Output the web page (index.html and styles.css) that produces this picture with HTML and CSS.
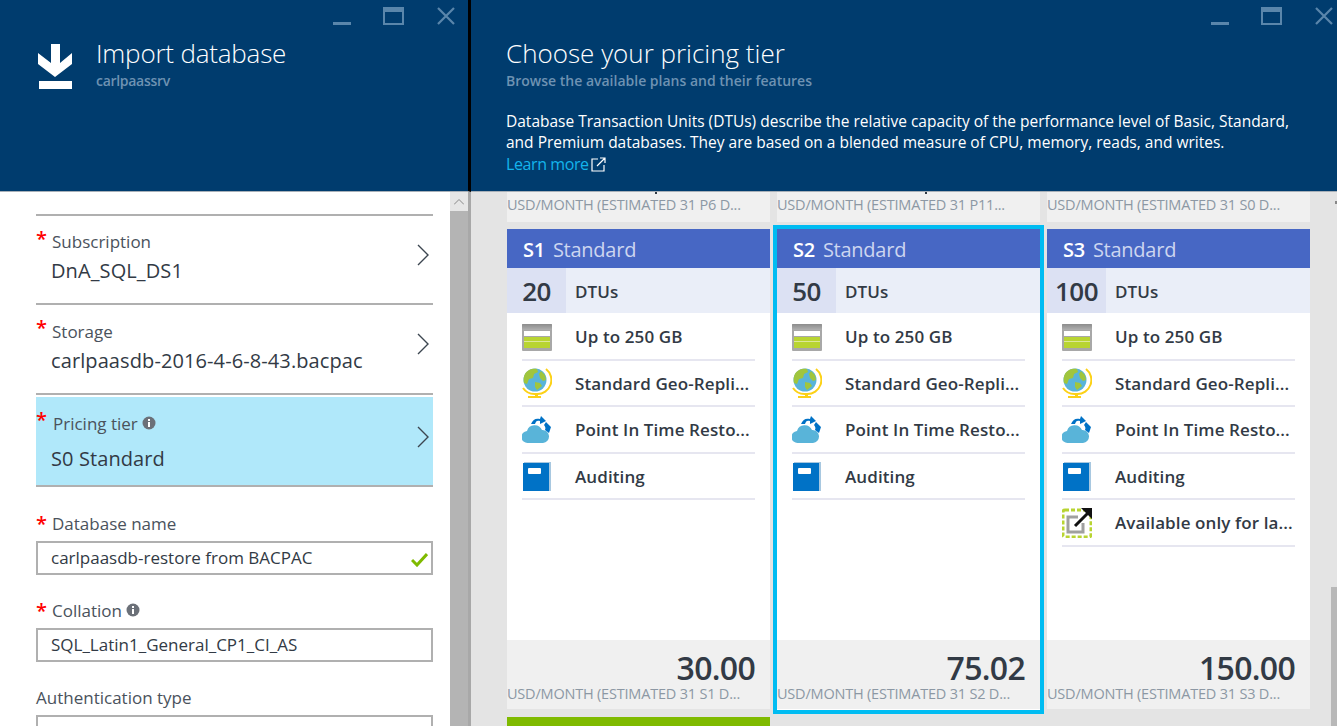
FILE: index.html
```html
<!DOCTYPE html>
<html lang="en">
<head>
  <meta charset="UTF-8">
  <title>Import database</title>
  <link rel="stylesheet" href="styles.css">
</head>
<body>
  <svg class="defs" width="0" height="0">
    <defs>
      <linearGradient id="g-top" x1="0" y1="0" x2="0" y2="1">
        <stop offset="0" stop-color="#8c8c8c"/>
        <stop offset="1" stop-color="#b0b0b0"/>
      </linearGradient>
    </defs>
    <symbol id="i-storage" viewBox="0 0 30 30">
      <rect x="0" y="2" width="30" height="27" rx="1" fill="#a8a8a8"/>
      <rect x="0" y="2" width="30" height="6" rx="1" fill="url(#g-top)"/>
      <rect x="2" y="9" width="26" height="5" fill="#fff"/>
      <rect x="2" y="15" width="26" height="4" fill="#b8d432"/>
      <rect x="2" y="20" width="26" height="6" fill="#b8d432"/>
      <rect x="2" y="19" width="26" height="1" fill="#dde89a"/>
    </symbol>
    <symbol id="i-globe" viewBox="0 0 30 30">
      <path d="M24 1a14 14 0 0 1-9 25" fill="none" stroke="#fcd116" stroke-width="2"/>
      <path d="M1 20a14 14 0 0 0 12 6" fill="none" stroke="#fcd116" stroke-width="2"/>
      <rect x="13" y="25" width="3" height="3" fill="#fcd116"/>
      <rect x="6" y="28" width="13" height="2" fill="#fcd116"/>
      <circle cx="13" cy="12" r="11.500" fill="#59b4d9"/>
      <path d="M7 2c2-1 6-1.500 8-1l1 3-4 2-1 4-4 1-2 5-3-1C1 10 2 5 7 2zM19 3l4 4 1 5-3 1-3-3-1-4zM13 14l5 1 2 3-5 4-2-3z" fill="#a0c53d"/>
    </symbol>
    <symbol id="i-cloud" viewBox="0 0 30 30">
      <path d="M6 28a6 6 0 0 1-1-12 8 8 0 0 1 15-1 6.500 6.500 0 0 1 1 13z" fill="#59b4d9"/>
      <path d="M9 9c2-5 5-6 9-5l1-3 5 5-6 3 0-3c-3-1-4 0-5 3z" fill="#0072c6"/>
      <path d="M24 7l5 5-2 6-4-3c1-2 0-4-1-5z" fill="#0072c6"/>
    </symbol>
    <symbol id="i-book" viewBox="0 0 30 30">
      <rect x="2" y="1" width="27" height="29" fill="#a8c8e0"/>
      <rect x="1" y="2" width="26" height="28" fill="#0072c6"/>
      <rect x="6" y="7" width="13" height="6" rx="1" fill="#fff"/>
    </symbol>
    <symbol id="i-later" viewBox="0 0 30 30">
      <rect x="1" y="2" width="28" height="27" rx="2" fill="none" stroke="#b8d432" stroke-width="3" stroke-dasharray="4 2"/>
      <path d="M16 9H6v15h15V15" fill="none" stroke="#a0a0a0" stroke-width="3"/>
      <path d="M13 18L26 5" stroke="#111" stroke-width="3"/>
      <path d="M19 0h11v11z" fill="#111"/>
    </symbol>
    <symbol id="i-chevron" viewBox="0 0 14 22">
      <path d="M2 1l10 10L2 21" fill="none" stroke="#3c4650" stroke-width="1.400"/>
    </symbol>
    <symbol id="i-info" viewBox="0 0 14 14">
      <circle cx="7" cy="7" r="6.500" fill="#6b7078"/>
      <rect x="6" y="6" width="2" height="5" fill="#fff"/>
      <rect x="6" y="3" width="2" height="2" fill="#fff"/>
    </symbol>
  </svg>

  <div class="app">
    <section class="blade blade-left">
      <header class="blade-head head-left">
        <div class="win-btns">
          <span class="win-min"></span>
          <span class="win-max"></span>
          <svg class="win-close" width="18" height="18" viewBox="0 0 18 18"><path d="M1 1l16 16M17 1L1 17" stroke="#5a86ab" stroke-width="2.200"/></svg>
        </div>
        <div class="title-row">
          <svg class="import-icon" width="34" height="46" viewBox="0 0 34 46">
            <path d="M13 0h9v19l12-10v11L17 33 0 20V9l13 10z" fill="#fff"/>
            <rect x="1" y="37" width="33" height="8" fill="#fff"/>
          </svg>
          <div>
            <h1 class="title">Import database</h1>
            <div class="subtitle">carlpaassrv</div>
          </div>
        </div>
      </header>
      <div class="blade-body">
        <div class="form">
          <div class="picker">
            <span class="req">*</span>
            <div class="label">Subscription</div>
            <div class="value">DnA_SQL_DS1</div>
            <svg class="chevron"><use href="#i-chevron"/></svg>
          </div>
          <div class="picker">
            <span class="req">*</span>
            <div class="label">Storage</div>
            <div class="value">carlpaasdb-2016-4-6-8-43.bacpac</div>
            <svg class="chevron"><use href="#i-chevron"/></svg>
          </div>
          <div class="picker picker-active">
            <div class="picker-fill">
              <span class="req">*</span>
              <div class="label">Pricing tier <svg class="info"><use href="#i-info"/></svg></div>
              <div class="value">S0 Standard</div>
              <svg class="chevron"><use href="#i-chevron"/></svg>
            </div>
          </div>
          <div class="field">
            <div class="field-label"><span class="req-inline">*</span>Database name</div>
            <div class="input">carlpaasdb-restore from BACPAC
              <svg class="check" width="17" height="14" viewBox="0 0 17 14"><path d="M1 7l5 5L16 1" fill="none" stroke="#7fba00" stroke-width="3"/></svg>
            </div>
          </div>
          <div class="field">
            <div class="field-label"><span class="req-inline">*</span>Collation <svg class="info"><use href="#i-info"/></svg></div>
            <div class="input">SQL_Latin1_General_CP1_CI_AS</div>
          </div>
          <div class="field">
            <div class="field-label">Authentication type</div>
            <div class="input"></div>
          </div>
        </div>
        <div class="scrollbar">
          <div class="scroll-up">
            <svg width="10" height="6" viewBox="0 0 10 6"><path d="M0 5.500l5-5 5 5" fill="none" stroke="#888" stroke-width="1"/></svg>
          </div>
        </div>
      </div>
    </section>

    <section class="blade blade-right">
      <header class="blade-head head-right">
        <div class="win-btns win-btns-right">
          <span class="win-min"></span>
          <span class="win-max"></span>
          <svg class="win-close" width="18" height="18" viewBox="0 0 18 18"><path d="M1 1l16 16M17 1L1 17" stroke="#5a86ab" stroke-width="2.200"/></svg>
        </div>
        <h2 class="title">Choose your pricing tier</h2>
        <div class="subtitle">Browse the available plans and their features</div>
        <p class="desc">Database Transaction Units (DTUs) describe the relative capacity of the performance level of Basic, Standard, and Premium databases. They are based on a blended measure of CPU, memory, reads, and writes.</p>
        <a class="learn" href="#">Learn more<svg width="15" height="15" viewBox="0 0 15 15"><path d="M7 2H1v12h12V8M6 9l8-8M9 1h5v5" fill="none" stroke="#fff" stroke-width="1.200"/></svg></a>
      </header>
      <div class="blade-body tiers">
        <div class="tier-grid">
          <div class="card stub"><span class="tail"></span><div class="usd">USD/MONTH (ESTIMATED 31 P6 D...</div></div>
          <div class="card stub"><span class="tail"></span><div class="usd">USD/MONTH (ESTIMATED 31 P11...</div></div>
          <div class="card stub"><span class="tail tail-none"></span><div class="usd">USD/MONTH (ESTIMATED 31 S0 D...</div></div>

          <div class="card">
            <div class="card-head"><b>S1</b> Standard</div>
            <div class="dtu"><span class="dtu-num">20</span><span class="dtu-label">DTUs</span></div>
            <div class="feature"><svg class="ficon"><use href="#i-storage"/></svg>Up to 250 GB</div>
            <div class="feature"><svg class="ficon"><use href="#i-globe"/></svg>Standard Geo-Repli...</div>
            <div class="feature"><svg class="ficon"><use href="#i-cloud"/></svg>Point In Time Resto...</div>
            <div class="feature"><svg class="ficon"><use href="#i-book"/></svg>Auditing</div>
            <div class="foot"><div class="price">30.00</div><div class="usd">USD/MONTH (ESTIMATED 31 S1 D...</div></div>
          </div>
          <div class="card selected">
            <div class="card-head"><b>S2</b> Standard</div>
            <div class="dtu"><span class="dtu-num">50</span><span class="dtu-label">DTUs</span></div>
            <div class="feature"><svg class="ficon"><use href="#i-storage"/></svg>Up to 250 GB</div>
            <div class="feature"><svg class="ficon"><use href="#i-globe"/></svg>Standard Geo-Repli...</div>
            <div class="feature"><svg class="ficon"><use href="#i-cloud"/></svg>Point In Time Resto...</div>
            <div class="feature"><svg class="ficon"><use href="#i-book"/></svg>Auditing</div>
            <div class="foot"><div class="price">75.02</div><div class="usd">USD/MONTH (ESTIMATED 31 S2 D...</div></div>
          </div>
          <div class="card">
            <div class="card-head"><b>S3</b> Standard</div>
            <div class="dtu"><span class="dtu-num">100</span><span class="dtu-label">DTUs</span></div>
            <div class="feature"><svg class="ficon"><use href="#i-storage"/></svg>Up to 250 GB</div>
            <div class="feature"><svg class="ficon"><use href="#i-globe"/></svg>Standard Geo-Repli...</div>
            <div class="feature"><svg class="ficon"><use href="#i-cloud"/></svg>Point In Time Resto...</div>
            <div class="feature"><svg class="ficon"><use href="#i-book"/></svg>Auditing</div>
            <div class="feature"><svg class="ficon"><use href="#i-later"/></svg>Available only for la...</div>
            <div class="foot"><div class="price">150.00</div><div class="usd">USD/MONTH (ESTIMATED 31 S3 D...</div></div>
          </div>

          <div class="select-bar"></div>
        </div>
        <div class="scroll-mark"></div>
        <div class="thumb"></div>
      </div>
    </section>
  </div>
</body>
</html>
```

FILE: styles.css
```css
html, body {
  margin: 0;
  padding: 0;
  height: 100%;
  overflow: hidden;
}
body {
  font-family: "Open Sans", "Noto Sans", sans-serif;
  color: #323a45;
  background-color: #e4e4e4;
}
.defs {
  position: absolute;
}
.app {
  display: flex;
  height: 726px;
}
.blade {
  display: flex;
  flex-direction: column;
  min-width: 0;
}
.blade-left {
  width: 471px;
  flex: none;
}
.blade-right {
  flex: 1;
}
.blade-head {
  height: 192px;
  flex: none;
  box-sizing: border-box;
  background-color: #003c6e;
  border-bottom: 1px solid #a8b0b8;
  color: #fff;
}
.head-left {
  border-right: 3px solid #000;
  padding: 7px 13px 0 38px;
}
.head-right {
  padding: 7px 4px 0 35px;
}
.win-btns {
  display: flex;
  justify-content: flex-end;
  align-items: flex-start;
  height: 18px;
}
.win-min {
  width: 18px;
  height: 3px;
  margin-top: 15px;
}
.win-min, .win-max {
  display: block;
  background-color: #5a86ab;
}
.win-max {
  box-sizing: border-box;
  width: 21px;
  height: 18px;
  margin-left: 32px;
  margin-right: 33px;
  background-color: transparent;
  border: 2px solid #5a86ab;
  border-top-width: 5px;
}
.title-row {
  display: flex;
  gap: 24px;
  margin-top: 19px;
}
.import-icon {
  flex: none;
}
.title {
  margin: 0;
  font-size: 26px;
  font-weight: 300;
  line-height: 32px;
  color: #fff;
}
.title-row .title {
  margin-top: -7px;
  letter-spacing: -0.2px;
}
.head-right .title {
  margin-top: 12px;
}
.subtitle {
  font-size: 14px;
  font-weight: 600;
  line-height: 18px;
  margin-top: 3px;
  color: #6e92b2;
}
.title-row .subtitle {
  letter-spacing: -0.3px;
}
.desc {
  margin: 21px 0 0;
  width: 800px;
  font-size: 15.500px;
  line-height: 21px;
}
.learn {
  display: flex;
  align-items: center;
  gap: 2px;
  font-size: 16px;
  line-height: 22px;
  letter-spacing: -0.4px;
  color: #14b4ec;
  text-decoration: none;
}
.blade-body {
  flex: 1;
  display: flex;
  min-height: 0;
  overflow: hidden;
}

/* left form */
.form {
  width: 450px;
  flex: none;
  box-sizing: border-box;
  background-color: #fff;
  padding: 22px 17px 0 36px;
}
.picker {
  position: relative;
  height: 89px;
  border-top: 2px solid #b0b0b0;
  box-sizing: border-box;
  padding: 15px 0 0 15px;
}
.picker + .picker {
  height: 90px;
  padding-top: 16px;
}
.picker + .picker.picker-active {
  height: 94px;
  padding: 2px 0 0;
  border-bottom: 2px solid #b0b0b0;
}
.picker-fill {
  position: relative;
  height: 88px;
  padding: 16px 0 0 15px;
  box-sizing: border-box;
  background-color: #b0e8fa;
}
.req, .req-inline {
  color: #f00;
  font-size: 20px;
  font-weight: 600;
  line-height: 20px;
}
.req {
  position: absolute;
  left: 0;
  top: 13px;
}
.req-inline {
  display: inline-block;
  width: 16px;
  vertical-align: -1px;
}
.label {
  padding-left: 1px;
}
.picker-fill .label {
  padding-left: 2px;
}
.label, .field-label {
  font-size: 17px;
  line-height: 22px;
  color: #4a525c;
}
.value {
  font-size: 20px;
  line-height: 26px;
  margin-top: 5px;
  letter-spacing: 0.1px;
  color: #323a45;
}
.picker-fill .value {
  margin-top: 11px;
}
.chevron {
  position: absolute;
  right: 3px;
  top: 28px;
  width: 14px;
  height: 22px;
}
.picker-fill .chevron {
  top: 29px;
}
.info {
  width: 14px;
  height: 14px;
  vertical-align: 0;
}
.field {
  padding-top: 25px;
}
.picker-active + .field {
  padding-top: 26px;
}
.field-label {
  margin-bottom: 6px;
}
.input {
  box-sizing: border-box;
  height: 34px;
  border: 2px solid #b0b0b0;
  padding-left: 13px;
  font-size: 17px;
  line-height: 29px;
  color: #323a45;
  position: relative;
}
.check {
  position: absolute;
  right: 3px;
  top: 10px;
}
.scrollbar {
  width: 18px;
  flex: none;
  background-color: #b4b4b4;
  border-right: 3px solid #a8a8a8;
}
.scroll-up {
  height: 19px;
  background-color: #e6e6e6;
  display: flex;
  align-items: center;
  justify-content: center;
}

/* pricing cards */
.tiers {
  position: relative;
  background-color: #e4e4e4;
}
.tier-grid {
  display: grid;
  grid-template-columns: repeat(3, 263px);
  grid-template-rows: 30px 480px 20px;
  gap: 7px;
  padding-left: 36px;
}
.card {
  display: flex;
  flex-direction: column;
  background-color: #fff;
  overflow: hidden;
}
.selected {
  height: 481px;
  outline: 4px solid #00bcf2;
  overflow: visible;
}
.selected .foot {
  margin-bottom: 1px;
}
.stub {
  background-color: #f0f0f0;
  white-space: nowrap;
}
.tail {
  display: block;
  flex: none;
  width: 2px;
  height: 2px;
  margin: 0 0 2px 148px;
  background-color: #323a45;
}
.tail-none {
  background-color: transparent;
}
.card-head {
  height: 39px;
  flex: none;
  padding-left: 16px;
  background-color: #4767c4;
  color: #cdd6f0;
  font-size: 20px;
  line-height: 41px;
  letter-spacing: -0.25px;
}
.card-head b {
  font-weight: 600;
  color: #fff;
  margin-right: 3px;
}
.dtu {
  display: flex;
  height: 45px;
  flex: none;
  margin-bottom: 1px;
  background-color: #eaeef8;
}
.dtu-num {
  width: 59px;
  flex: none;
  background-color: #dce1f3;
  text-align: center;
  font-size: 26px;
  font-weight: 600;
  line-height: 47px;
  letter-spacing: -0.5px;
}
.dtu-label {
  padding-left: 9px;
  font-size: 17px;
  font-weight: 600;
  line-height: 47px;
  letter-spacing: 0.1px;
}
.feature {
  display: flex;
  align-items: center;
  flex: none;
  box-sizing: border-box;
  height: 46.500px;
  margin: 0 15px;
  padding-top: 1px;
  border-bottom: 2px solid #e6e6f0;
  font-size: 17px;
  font-weight: 600;
  letter-spacing: 0.1px;
  white-space: nowrap;
}
.ficon {
  width: 30px;
  height: 30px;
  flex: none;
  margin-right: 23px;
}
.foot {
  flex: none;
  box-sizing: border-box;
  height: 69px;
  margin-top: auto;
  background-color: #f0f0f0;
  overflow: hidden;
  white-space: nowrap;
}
.price {
  text-align: right;
  padding: 11px 15px 0 0;
  font-size: 32px;
  font-weight: 600;
  line-height: 34px;
  letter-spacing: -0.7px;
}
.usd {
  font-size: 14.500px;
  line-height: 18px;
  letter-spacing: -0.2px;
  color: #8c98a4;
}
.select-bar {
  margin-top: 1px;
  height: 20px;
  background-color: #7fba00;
}
.scroll-mark {
  position: absolute;
  right: 0;
  top: 9px;
  width: 2px;
  height: 3px;
  background-color: #888;
}
.thumb {
  position: absolute;
  right: 0;
  top: 395px;
  bottom: 0;
  width: 6px;
  background-color: #b8b8b8;
}
```
